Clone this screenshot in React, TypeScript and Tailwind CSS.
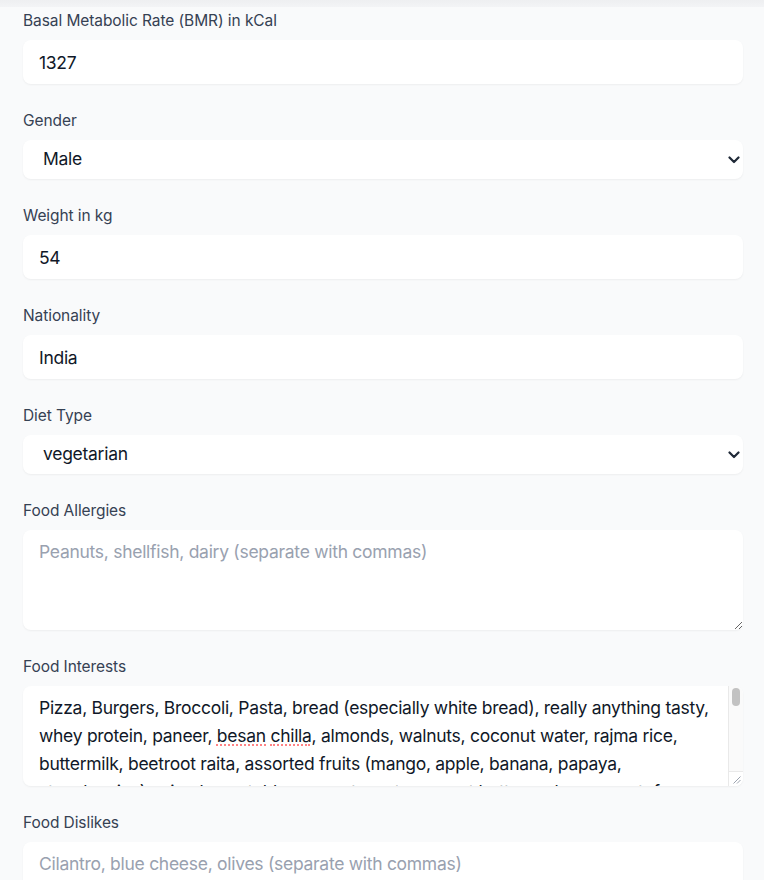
import { useState } from "react";

const FIELD =
  "w-full rounded-lg bg-white px-4 py-2 text-[17.5px] leading-7 tracking-[-0.016em] text-gray-900 placeholder:text-gray-400 shadow-xs outline-none";

const INTERESTS =
  "Pizza, Burgers, Broccoli, Pasta, bread (especially white bread), really anything tasty, whey protein, paneer, besan chilla, almonds, walnuts, coconut water, rajma rice, buttermilk, beetroot raita, assorted fruits (mango, apple, banana, papaya, strawberries), mixed vegetables, sprouts, oats, peanut butter, poha, upma, tofu";

function Label({ children }: { children: React.ReactNode }) {
  return (
    <label className="block pt-px mb-[7px] text-[15.5px] leading-6 tracking-[-0.005em] text-gray-700">
      {children}
    </label>
  );
}

function Chevron() {
  return (
    <svg
      className="pointer-events-none absolute right-[3px] top-1/2 -translate-y-1/2"
      width="12"
      height="8"
      viewBox="0 0 12 8"
      fill="none"
    >
      <path d="M1.5 1.5 6 6l4.5-4.5" stroke="#1f2937" strokeWidth="2.2" strokeLinecap="round" strokeLinejoin="round" />
    </svg>
  );
}

function Select({ value, options }: { value: string; options: string[] }) {
  const [v, setV] = useState(value);
  return (
    <div className="relative">
      <select
        value={v}
        onChange={(e) => setV(e.target.value)}
        className="block w-full h-[39px] appearance-none rounded-lg bg-white pl-5 pr-8 text-[17.5px] tracking-[-0.016em] text-gray-900 shadow-xs outline-none"
      >
        {options.map((o) => (
          <option key={o}>{o}</option>
        ))}
      </select>
      <Chevron />
    </div>
  );
}

export default function App() {
  return (
    <div
      className="relative min-h-screen bg-gray-50 pl-[23px] pr-[21px] pt-2"
      style={{ fontFamily: "Inter, 'Noto Sans', sans-serif" }}
    >
      <div className="absolute inset-x-0 top-0 h-[7px] bg-gradient-to-b from-[#eeeff1] to-[#f3f4f6]" />
      <div className="flex flex-col gap-6">
        <div>
          <Label>Basal Metabolic Rate (BMR) in kCal</Label>
          <input className={`${FIELD} block h-11`} defaultValue="1327" />
        </div>
        <div>
          <Label>Gender</Label>
          <Select value="Male" options={["Male", "Female", "Other"]} />
        </div>
        <div>
          <Label>Weight in kg</Label>
          <input className={`${FIELD} block h-11`} defaultValue="54" />
        </div>
        <div>
          <Label>Nationality</Label>
          <input className={`${FIELD} block h-11`} defaultValue="India" />
        </div>
        <div>
          <Label>Diet Type</Label>
          <Select value="vegetarian" options={["vegetarian", "non-vegetarian", "vegan", "eggetarian"]} />
        </div>
        <div>
          <Label>Food Allergies</Label>
          <textarea
            rows={3}
            className={`${FIELD} block h-[100px]`}
            placeholder="Peanuts, shellfish, dairy (separate with commas)"
          />
        </div>
        <div>
          <Label>Food Interests</Label>
          <div className="relative">
            <textarea
              rows={3}
              spellCheck={false}
              className={`${FIELD} block h-[100px] pr-[31px] resize-none`}
              defaultValue={INTERESTS}
            />
            {/* spell-check marks on "besan chilla" */}
            <div className="pointer-events-none absolute left-[193px] top-[58px] w-[50px] border-b-2 border-dotted border-red-400/80" />
            <div className="pointer-events-none absolute left-[247px] top-[58px] w-[40px] border-b-2 border-dotted border-red-400/80" />
            {/* scrollbar track drawn over the textarea */}
            <div className="pointer-events-none absolute right-0 top-0 bottom-0 flex w-[15px] flex-col overflow-hidden rounded-r-lg">
              <div className="flex-1 border-l border-[#e9e9e9] bg-[#fafafa] px-[3px] pt-[2px]">
                <div className="h-[18px] w-full rounded-full bg-[#c2c2c2]" />
              </div>
              <div className="relative h-[15px] border-l border-t border-[#e9e9e9] bg-white">
                <svg className="absolute right-[2px] bottom-[2px]" width="9" height="9" viewBox="0 0 9 9">
                  <path d="M8.5 1.5 1.5 8.5M8.5 5 5 8.5" stroke="#9ca3af" strokeWidth="1" />
                </svg>
              </div>
            </div>
          </div>
        </div>
        <div>
          <Label>Food Dislikes</Label>
          <textarea
            rows={3}
            className={`${FIELD} block h-[100px]`}
            placeholder="Cilantro, blue cheese, olives (separate with commas)"
          />
        </div>
      </div>
    </div>
  );
}
